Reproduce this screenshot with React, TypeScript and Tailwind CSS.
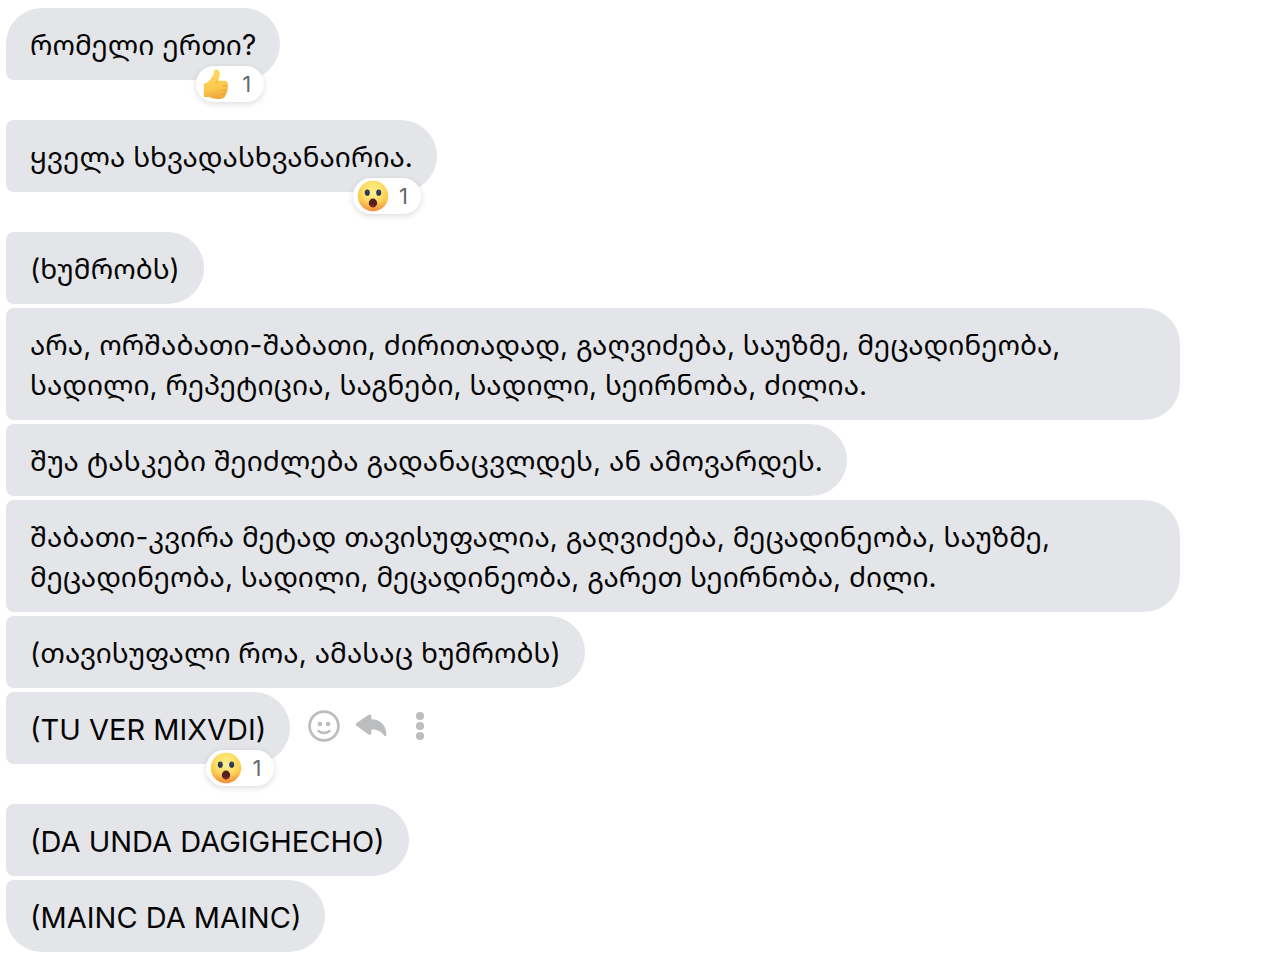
type Reaction = 'thumb' | 'wow';

type Message = {
  text: string;
  latin?: boolean;
  reaction?: Reaction;
  actions?: boolean;
};

const messages: Message[] = [
  { text: 'რომელი ერთი?', reaction: 'thumb' },
  { text: 'ყველა სხვადასხვანაირია.', reaction: 'wow' },
  { text: '(ხუმრობს)' },
  {
    text: 'არა, ორშაბათი-შაბათი, ძირითადად, გაღვიძება, საუზმე, მეცადინეობა, სადილი, რეპეტიცია, საგნები, სადილი, სეირნობა, ძილია.',
  },
  { text: 'შუა ტასკები შეიძლება გადანაცვლდეს, ან ამოვარდეს.' },
  {
    text: 'შაბათი-კვირა მეტად თავისუფალია, გაღვიძება, მეცადინეობა, საუზმე, მეცადინეობა, სადილი, მეცადინეობა, გარეთ სეირნობა, ძილი.',
  },
  { text: '(თავისუფალი როა, ამასაც ხუმრობს)' },
  { text: '(TU VER MIXVDI)', latin: true, reaction: 'wow', actions: true },
  { text: '(DA UNDA DAGIGHECHO)', latin: true },
  { text: '(MAINC DA MAINC)', latin: true },
];

function WowIcon() {
  return (
    <svg viewBox="0 0 32 32" className="size-8" aria-hidden="true">
      <defs>
        <linearGradient id="wow-face" x1="0" y1="0" x2="0" y2="1">
          <stop offset="0" stopColor="#fde066" />
          <stop offset="0.6" stopColor="#fbcb4c" />
          <stop offset="1" stopColor="#f4843a" />
        </linearGradient>
        <radialGradient id="wow-glow" cx="0.5" cy="0.4" r="0.55">
          <stop offset="0" stopColor="#fff29a" stopOpacity="0.95" />
          <stop offset="0.6" stopColor="#fee774" stopOpacity="0.6" />
          <stop offset="1" stopColor="#fbb745" stopOpacity="0.2" />
        </radialGradient>
      </defs>
      <circle cx="16" cy="16" r="15.2" fill="url(#wow-face)" />
      <circle cx="16" cy="16" r="15.2" fill="url(#wow-glow)" />
      <ellipse cx="10.3" cy="12.7" rx="2.5" ry="3.1" fill="#293654" />
      <ellipse cx="21.7" cy="12.7" rx="2.5" ry="3.1" fill="#293654" />
      <circle cx="10.6" cy="11.8" r="0.8" fill="#4e5c7a" />
      <circle cx="22" cy="11.8" r="0.8" fill="#4e5c7a" />
      <ellipse cx="16" cy="23" rx="4.2" ry="4.4" fill="#55201e" />
      <path d="M13 25.4q3-1.6 6 0q-1.2 1.9-3 1.9t-3-1.9Z" fill="#7e2527" />
    </svg>
  );
}

function ThumbIcon() {
  return (
    <svg viewBox="0 0 32 32" className="size-8" aria-hidden="true">
      <defs>
        <linearGradient id="thumb-skin" x1="0" y1="0" x2="0.2" y2="1">
          <stop offset="0" stopColor="#ffda68" />
          <stop offset="0.7" stopColor="#fbc84c" />
          <stop offset="1" stopColor="#efab3c" />
        </linearGradient>
      </defs>
      <path
        d="M3.8 15.6c1.6-.2 3-.5 4.5-2 2.8-2.8 5-5.8 5.6-9.2.3-2 .9-3.3 2.4-3.2 2.6.2 3.8 2.9 3.3 6.2-.3 2-.9 3.6-1.4 5.1 1.8.6 4 .3 6.2.2 2.8-.1 4.2 2.6 3 4.6 1.2 1.4 1 3.4-.3 4.4.6 1.8.1 3.4-1.4 4.1.2 2.3-1 3.9-3.4 4.6-4.2 1.1-8.6.8-11.6-.8-2-.6-4.4-.6-6.9-.5Z"
        fill="url(#thumb-skin)"
      />
      <path
        d="M22.8 17.8q2.6.6 4.6-.5M22.8 22.2q2.4.7 4.2-.4M22 26.3q1.8.4 3.5-.5M17.6 13q-1.4.6-2 1.8"
        fill="none"
        stroke="#e3a138"
        strokeWidth="0.9"
        strokeLinecap="round"
      />
    </svg>
  );
}

function ReactionBadge({ kind }: { kind: Reaction }) {
  return (
    <button
      type="button"
      aria-label={kind === 'thumb' ? 'Like, 1 reaction' : 'Wow, 1 reaction'}
      className="absolute right-4 -bottom-[22px] flex h-9 w-[68px] items-center gap-2.5 rounded-full bg-white pl-1 shadow-[0_2px_6px_rgba(0,0,0,0.14)]"
    >
      {kind === 'thumb' ? <ThumbIcon /> : <WowIcon />}
      <span className="text-[22px] leading-6 text-[#65676b]">1</span>
    </button>
  );
}

function MessageActions() {
  return (
    <div className="flex items-center pb-1 text-[#bcbdbf]">
      <button type="button" aria-label="React" className="flex w-12 justify-center">
        <svg viewBox="0 0 32 32" className="size-8" fill="currentColor">
          <circle cx="16" cy="16" r="14.4" fill="none" stroke="currentColor" strokeWidth="2.7" />
          <circle cx="12" cy="14" r="2.3" />
          <circle cx="20" cy="14" r="2.3" />
          <path d="M10.5 21q5.5 4 11 0" fill="none" stroke="currentColor" strokeWidth="2.5" strokeLinecap="round" />
        </svg>
      </button>
      <button type="button" aria-label="Reply" className="flex w-12 justify-center">
        <svg viewBox="0 0 32 32" className="size-8" fill="currentColor">
          <path d="M.2 13.3 12.1 5.2q3.2-2 3.2 1.5v2.6c9 0 15.1 6.2 15.1 15.2 0 2-1.4 2.1-2.5.7-2.7-3.7-6.6-5.6-12.6-5.6v3.3q0 3.4-3.2 1.4L.2 15.5q-1.2-1.1 0-2.2Z" />
        </svg>
      </button>
      <button type="button" aria-label="More" className="flex w-12 justify-center">
        <svg viewBox="0 0 32 32" className="size-8" fill="currentColor">
          <circle cx="16" cy="6" r="4.1" />
          <circle cx="16" cy="16" r="4.1" />
          <circle cx="16" cy="26" r="4.1" />
        </svg>
      </button>
    </div>
  );
}

function MessageRow({ message, first, last }: { message: Message; first: boolean; last: boolean }) {
  return (
    <li className={message.reaction ? 'flex gap-2.5 pb-9' : 'flex gap-2.5'}>
      <div
        className={`relative max-w-[1174px] rounded-r-[36px] bg-[#e4e5e9] px-6 ${
          message.latin ? 'pt-[18px] pb-3.5' : 'pt-[17px] pb-[15px]'
        } ${first ? 'rounded-tl-[36px]' : 'rounded-tl-lg'} ${last ? 'rounded-bl-[36px]' : 'rounded-bl-lg'}`}
      >
        <p className={`leading-10 text-[#050505] ${message.latin ? 'text-[29px]' : 'text-[28px]'}`}>
          {message.text}
        </p>
        {message.reaction && <ReactionBadge kind={message.reaction} />}
      </div>
      {message.actions && <MessageActions />}
    </li>
  );
}

export default function App() {
  return (
    <main className="min-h-screen bg-white px-1.5 py-2 font-['Inter','Noto_Sans_Georgian','Noto_Sans','DejaVu_Sans',sans-serif]">
      <ul className="flex flex-col gap-1">
        {messages.map((message, index) => (
          <MessageRow
            key={message.text}
            message={message}
            first={index === 0}
            last={index === messages.length - 1}
          />
        ))}
      </ul>
    </main>
  );
}
